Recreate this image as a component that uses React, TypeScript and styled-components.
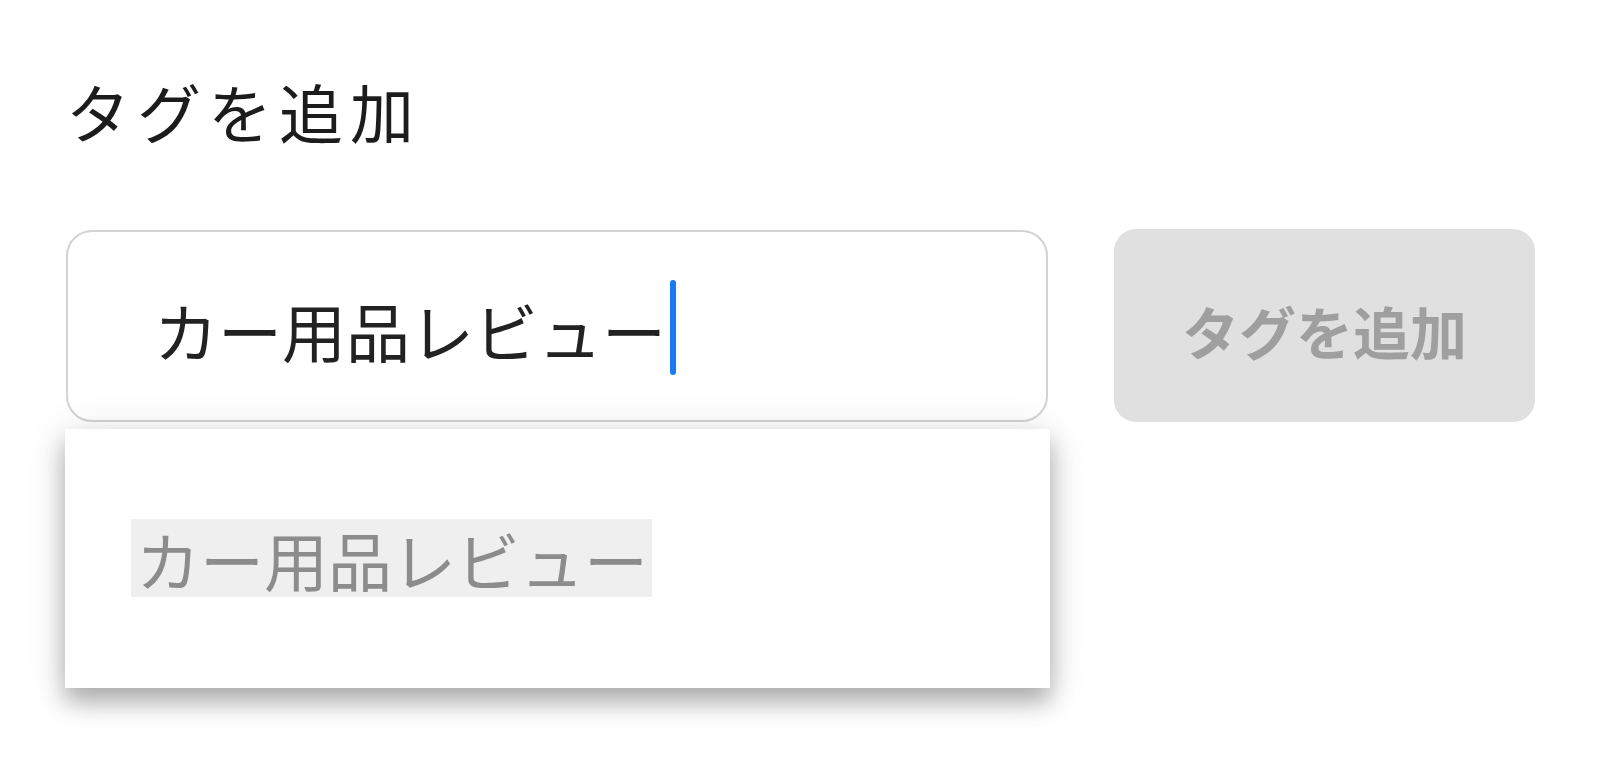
import React from "react";
import styled, { createGlobalStyle } from "styled-components";

const Global = createGlobalStyle`
  html, body { margin: 0; padding: 0; background: #ffffff; }
`;

const Page = styled.div`
  box-sizing: border-box;
  width: 1600px;
  height: 783px;
  padding: 70px 0 0 66px;
`;

const Title = styled.div`
  font-family: "Noto Sans CJK JP", sans-serif;
  font-size: 64px;
  line-height: 80px;
  letter-spacing: 7px;
  color: #1c1c1c;
`;

const Row = styled.div`
  display: flex;
  align-items: flex-start;
  gap: 66px;
  margin-top: 80px;
`;

const Field = styled.div`
  position: relative;
  width: 982px;
`;

const InputBox = styled.div`
  box-sizing: border-box;
  height: 192px;
  border: 2px solid #d3d3d3;
  border-radius: 26px;
  background: #ffffff;
  display: flex;
  align-items: center;
  padding: 6px 0 0 86px;
`;

const InputText = styled.span`
  font-family: "Noto Sans CJK JP", sans-serif;
  font-size: 64px;
  line-height: 1.2;
  color: #222222;
`;

const Caret = styled.span`
  display: inline-block;
  width: 6px;
  height: 95px;
  border-radius: 3px;
  background: #1a7af0;
  margin-left: 4px;
  margin-top: -4px;
`;

const AddButton = styled.button`
  width: 421px;
  height: 193px;
  border: none;
  border-radius: 22px;
  background: #e0e0e0;
  color: #9f9f9f;
  font-family: "Noto Sans CJK JP", sans-serif;
  font-size: 57px;
  font-weight: 700;
  margin-top: -1px;
  padding: 8px 0 0;
`;

const Dropdown = styled.div`
  position: absolute;
  top: 199px;
  left: -1px;
  width: 985px;
  height: 259px;
  background: #ffffff;
  box-shadow: 0 14px 22px rgba(0, 0, 0, 0.28), 0 4px 40px rgba(0, 0, 0, 0.12);
  box-sizing: border-box;
  padding: 90px 0 0 66px;
`;

const Option = styled.div`
  display: inline-block;
  background: #efefef;
  height: 78px;
  line-height: 78px;
  font-family: "Noto Sans CJK JP", sans-serif;
  font-size: 64px;
  color: #8c8c8c;
  padding: 0 4px 0 5px;
`;

export default function App() {
  return (
    <>
      <Global />
      <Page>
        <Title>タグを追加</Title>
        <Row>
          <Field>
            <InputBox>
              <InputText>カー用品レビュー</InputText>
              <Caret />
            </InputBox>
            <Dropdown>
              <Option>カー用品レビュー</Option>
            </Dropdown>
          </Field>
          <AddButton disabled>タグを追加</AddButton>
        </Row>
      </Page>
    </>
  );
}
